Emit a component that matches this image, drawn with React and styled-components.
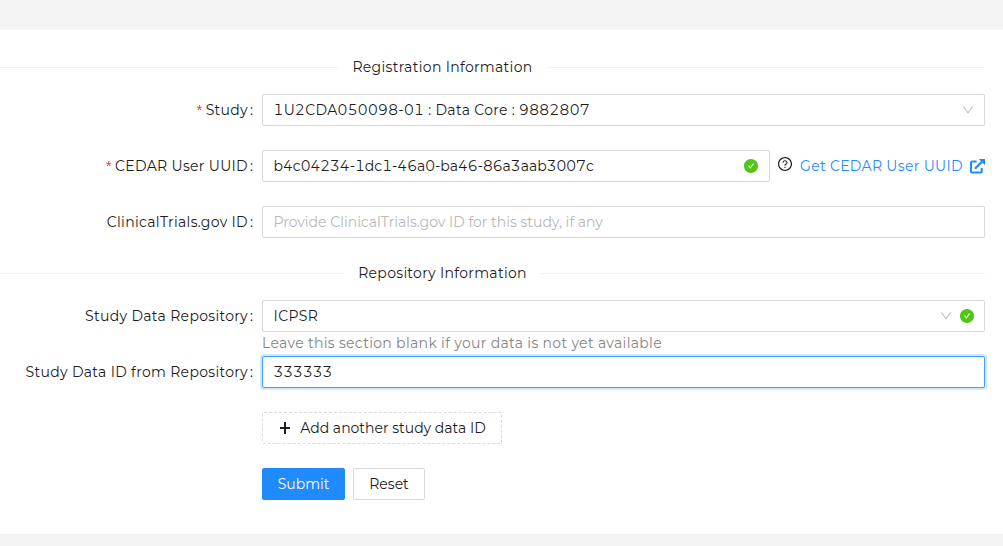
import React from 'react';
import styled, { createGlobalStyle } from 'styled-components';
import { AiOutlineDown, AiFillCheckCircle, AiOutlineQuestionCircle } from 'react-icons/ai';

const GlobalStyle = createGlobalStyle`
  * { box-sizing: border-box; }
  body {
    margin: 0;
    background: #f4f4f4;
    color: #1c1c1c;
    font: 400 14px/22px Montserrat, Inter, "Liberation Sans", sans-serif;
    font-feature-settings: "tnum";
    overflow: hidden;
  }
`;

const Page = styled.main`
  height: 546px;
  padding: 30px 0 12px;
`;

const Card = styled.form`
  height: 504px;
  padding: 26px 18px 0 0;
  background: #fff;
  display: flex;
  flex-direction: column;
`;

const Text = styled.span`
  letter-spacing: ${(p) => (p.$tight ? 0 : 0.32)}px;
  white-space: nowrap;
`;

const Divider = styled.div`
  display: grid;
  grid-template-columns: ${(p) => p.$left}px auto 1fr;
  align-items: center;
  height: 22px;
  margin-top: ${(p) => p.$top || 0}px;
  &::before, &::after {
    content: '';
    height: 1px;
    background: #f0f0f0;
  }
`;

const DividerTitle = styled.span`
  width: ${(p) => p.$width}px;
  text-align: center;
`;

const Row = styled.div`
  display: grid;
  grid-template-columns: 253px 1fr;
  column-gap: 9px;
  align-items: center;
  height: 32px;
  margin-top: ${(p) => p.$top}px;
`;

const Label = styled.label`
  display: flex;
  justify-content: flex-end;
  white-space: nowrap;
`;

const Required = styled.span`
  width: 9px;
  color: #ff2a35;
  font: 14px/22px "Liberation Sans", sans-serif;
`;

const Colon = styled.span`
  width: 4px;
  margin-left: 1px;
  text-align: right;
`;

const Field = styled.div`
  display: flex;
  align-items: center;
  gap: 6px;
  width: ${(p) => (p.$width ? `${p.$width}px` : 'auto')};
  height: 32px;
  padding: 0 ${(p) => (p.$width ? 10 : 9)}px 0 ${(p) => (p.$select ? 10.6 : 10.5)}px;
  background: #fff;
  border: 1px solid ${(p) => (p.$focused ? '#40a0ff' : '#d9d9d9')};
  border-radius: 2px;
  box-shadow: ${(p) => (p.$focused ? '0 0 0 2px rgba(24, 136, 255, 0.2)' : 'none')};
  svg { flex: none; display: block; }
`;

const Value = styled.span`
  flex: 1;
  color: ${(p) => (p.$placeholder ? '#b8b8b8' : '#1c1c1c')};
`;

const Controls = styled.div`
  display: flex;
  align-items: center;
`;

const Help = styled.span`
  display: flex;
  margin: -4px 7px 0 7px;
`;

const Link = styled.a`
  display: flex;
  flex: 1;
  align-items: center;
  gap: 7px;
  color: #1f8bff;
`;

const Hint = styled.div`
  height: 24px;
  padding-left: 262px;
  color: #858585;
`;

const Actions = styled.div`
  display: flex;
  gap: 8px;
  margin: 24px 0 0 262px;
`;

const Button = styled.button`
  display: flex;
  align-items: center;
  justify-content: center;
  gap: 8px;
  width: ${(p) => p.$width}px;
  height: 32px;
  padding: 0;
  font: inherit;
  color: ${(p) => (p.$primary ? '#fff' : '#1c1c1c')};
  background: ${(p) => (p.$primary ? '#1f8bff' : '#fff')};
  border: 1px ${(p) => (p.$dashed ? 'dashed' : 'solid')} ${(p) => (p.$primary ? '#1f8bff' : '#d9d9d9')};
  border-radius: 2px;
`;

const ExternalLink = () => (
  <svg width="15" height="15" viewBox="0 0 15 15" fill="none">
    <path d="M6.5 2.5H2.1Q1 2.5 1 3.5V12.4Q1 13.4 2.1 13.4H10.7Q11.7 13.4 11.7 12.4V9" stroke="currentColor" strokeWidth="2" />
    <path d="M4.9 9.7L12 2.6" stroke="currentColor" strokeWidth="2.2" />
    <path d="M8.8 0H15V6.2Z" fill="currentColor" />
  </svg>
);

const Plus = () => (
  <svg width="14" height="14" viewBox="0 0 14 14" fill="none">
    <path d="M7 1V13M2 7H12" stroke="currentColor" strokeWidth="2" />
  </svg>
);

const FormLabel = ({ text, required }) => (
  <Label>
    {required && <Required>*</Required>}
    <Text>{text}</Text>
    <Colon>:</Colon>
  </Label>
);

const Down = () => <AiOutlineDown size={14} color="#bfbfbf" />;
const Check = () => <AiFillCheckCircle size={16} color="#52c41a" />;

export default function App() {
  return (
    <>
      <GlobalStyle />
      <Page>
        <Card>
          <Divider $left={338}>
            <DividerTitle $width={209}><Text>Registration Information</Text></DividerTitle>
          </Divider>
          <Row $top={16}>
            <FormLabel required text="Study" />
            <Field $select>
              <Value><Text>1U2CDA050098-01 : Data Core : 9882807</Text></Value>
              <Down />
            </Field>
          </Row>
          <Row $top={24}>
            <FormLabel required text="CEDAR User UUID" />
            <Controls>
              <Field $width={508}>
                <Value><Text $tight>b4c04234-1dc1-46a0-ba46-86a3aab3007c</Text></Value>
                <Check />
              </Field>
              <Help><AiOutlineQuestionCircle size={16} /></Help>
              <Link>
                <Text>Get CEDAR User UUID</Text>
                <ExternalLink />
              </Link>
            </Controls>
          </Row>
          <Row $top={24}>
            <FormLabel text="ClinicalTrials.gov ID" />
            <Field>
              <Value $placeholder><Text $tight>Provide ClinicalTrials.gov ID for this study, if any</Text></Value>
            </Field>
          </Row>
          <Divider $left={344} $top={24}>
            <DividerTitle $width={197}><Text>Repository Information</Text></DividerTitle>
          </Divider>
          <Row $top={16}>
            <FormLabel text="Study Data Repository" />
            <Field $select>
              <Value><Text>ICPSR</Text></Value>
              <Down />
              <Check />
            </Field>
          </Row>
          <Hint><Text>Leave this section blank if your data is not yet available</Text></Hint>
          <Row $top={0}>
            <FormLabel text="Study Data ID from Repository" />
            <Field $focused>
              <Value><Text $tight>333333</Text></Value>
            </Field>
          </Row>
          <Actions>
            <Button type="button" $width={240} $dashed>
              <Plus />
              <Text $tight>Add another study data ID</Text>
            </Button>
          </Actions>
          <Actions>
            <Button type="button" $width={83} $primary><Text $tight>Submit</Text></Button>
            <Button type="button" $width={72}><Text $tight>Reset</Text></Button>
          </Actions>
        </Card>
      </Page>
    </>
  );
}
